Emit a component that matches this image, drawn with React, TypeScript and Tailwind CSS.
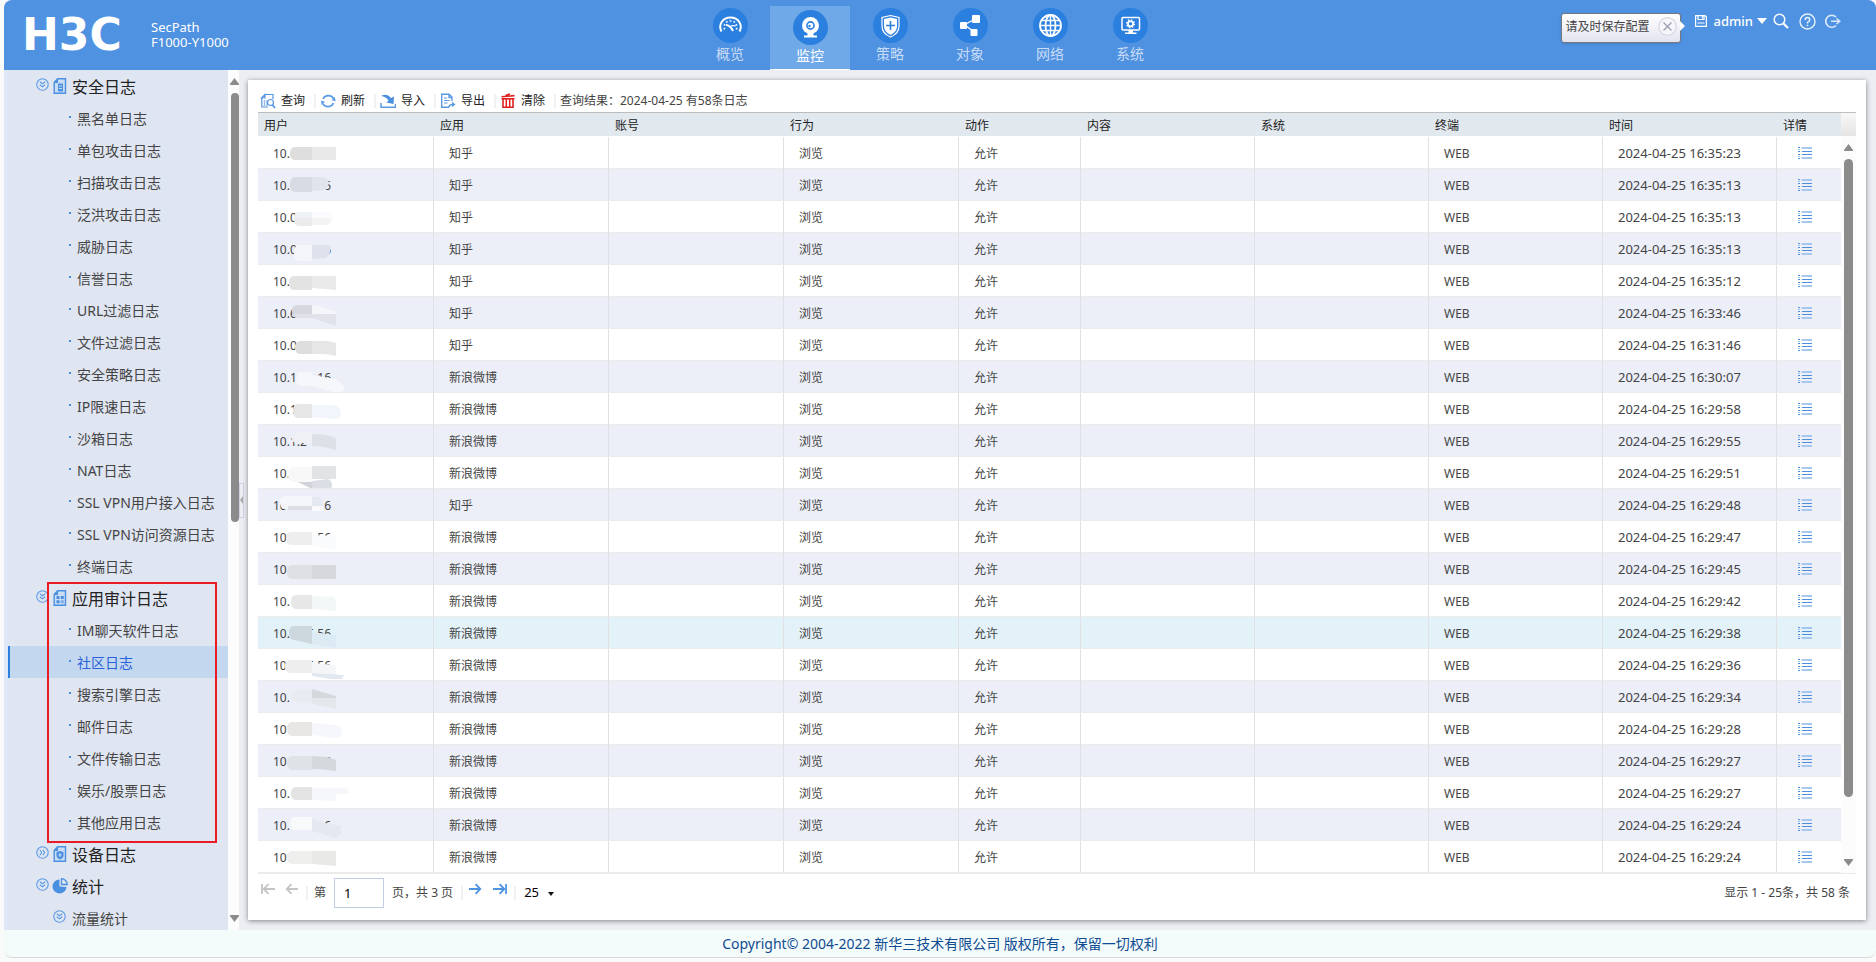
import { ReactNode } from 'react'

type Side = [number, number, number, string]
type Smudge = {
  left: Side
  right: string
  fill: string
  extra?: [string, string][]
}
type Row = {
  head: string
  tail?: string
  app: string
  time: string
  mask: Smudge
}

const ZH = '知乎'
const WB = '新浪微博'

const rows: Row[] = [
  { head: '10.6', app: ZH, time: '16:35:23', mask: { left: [17, 10, 23, '#dedede'], right: 'M39 10H63V23H39Z', fill: '#e9e9e9' } },
  { head: '10.6', tail: '5', app: ZH, time: '16:35:13', mask: { left: [17, 8, 23, '#d8dbe4'], right: 'M39 8H50Q55 9 56 14L53 21L39 22Z', fill: '#e1e4ed' } },
  { head: '10.0', app: ZH, time: '16:35:13', mask: { left: [21, 11, 25, '#ebebeb'], right: 'M39 17H59Q58 24 53 24H39Z', fill: '#f4f4f4', extra: [['M25 11H39V17H21Z', '#eef1f6'], ['M39 11H54Q58 12 59 17H39Z', '#fafbfe']] } },
  { head: '10.0', tail: '6', app: ZH, time: '16:35:13', mask: { left: [21, 12, 28, '#f5f6fa'], right: 'M39 12H57Q59 20 53 25L39 26Z', fill: '#dfe2ec' } },
  { head: '10.', app: ZH, time: '16:35:12', mask: { left: [16, 11, 25, '#e3e3e3'], right: 'M39 11H63V25L39 23Z', fill: '#eaeaea' } },
  { head: '10.6', app: ZH, time: '16:33:46', mask: { left: [19, 8, 21, '#d6d8de'], right: 'M39 8Q52 10 63 15V18H39Z', fill: '#f5f6fa', extra: [['M21 17H39V21H24Z', '#dfe2e8'], ['M39 17H63V29L39 21Z', '#e0e3ea']] } },
  { head: '10.0', app: ZH, time: '16:31:46', mask: { left: [22, 12, 25, '#dedede'], right: 'M39 12H55L63 14V27Q50 24 39 25Z', fill: '#e6e6e6' } },
  { head: '10.1', tail: '16', app: WB, time: '16:30:07', mask: { left: [23, 11, 25, '#f5f7fa'], right: 'M39 14L63 18L71 25V29Q70 32 63 32L39 25Z', fill: '#f6f7fa' } },
  { head: '10.1', app: WB, time: '16:29:58', mask: { left: [20, 11, 25, '#e6e6e6'], right: 'M39 12H61Q68 14 68 20Q68 26 61 26L39 24Z', fill: '#f2f6fc' } },
  { head: '10.1.2', app: WB, time: '16:29:55', mask: { left: [19, 7, 18, '#eef0f5'], right: 'M39 9Q54 9 63 13V25Q50 21 39 21Z', fill: '#dde0e6' } },
  { head: '10.', app: WB, time: '16:29:51', mask: { left: [15, 10, 25, '#f8f8f8'], right: 'M39 9H63V22H39Z', fill: '#e2e3e4', extra: [['M25 25H39V32Z', '#d0d3d9'], ['M39 24L55 22Q60 25 59 30L57 32L39 32Z', '#dcdee5']] } },
  { head: '10', tail: '6', app: ZH, time: '16:29:48', mask: { left: [7, 7, 20, '#f5f6fa'], right: 'M39 8H46Q50 11 50 17V21L39 22Z', fill: '#e4e8f0', extra: [['M15 17H39V21H15Z', '#dcdee5'], ['M39 17H50V22H39Z', '#fbfbfd']] } },
  { head: '10', tail: '56', app: WB, time: '16:29:47', mask: { left: [13, 11, 24, '#eeeeef'], right: 'M39 14L63 15V29L39 25Z', fill: '#fafbfd' } },
  { head: '10', app: WB, time: '16:29:45', mask: { left: [14, 12, 26, '#dee0e5'], right: 'M39 12H63V26H39Z', fill: '#d6d8dd' } },
  { head: '10.', app: WB, time: '16:29:42', mask: { left: [18, 10, 24, '#e6e7e6'], right: 'M39 11L60 12L63 15V26L39 24Z', fill: '#f3f7f8' } },
  { head: '10.', tail: '5.56', app: WB, time: '16:29:38', mask: { left: [16, 9, 23, '#ccd7de'], right: 'M39 15L63 18V31L39 27Z', fill: '#dcebf3', extra: [['M22 23L39 20V27Z', '#ccd7de']] } },
  { head: '10', tail: '5.56', app: WB, time: '16:29:36', mask: { left: [12, 11, 24, '#eeeeef'], right: 'M39 14L63 16V26H39Z', fill: '#f5f6f8', extra: [['M39 24L71 26L69 30H58L39 27Z', '#e2e8f0']] } },
  { head: '10.', app: WB, time: '16:29:34', mask: { left: [18, 9, 21, '#e8ecf0'], right: 'M39 8L63 15V18H39Z', fill: '#d5d8dc', extra: [['M39 17H63V28L39 23Z', '#e4e7ec']] } },
  { head: '10', app: WB, time: '16:29:28', mask: { left: [14, 9, 23, '#e8e7e6'], right: 'M39 10L63 12Q69 14 69 19Q69 25 63 25L39 22Z', fill: '#f6f7fc' } },
  { head: '10', tail: '6', app: WB, time: '16:29:27', mask: { left: [14, 11, 25, '#dfe2e7'], right: 'M39 11L55 12L63 15V26Q50 24 39 24Z', fill: '#d5d8dd' } },
  { head: '10.', app: WB, time: '16:29:27', mask: { left: [18, 10, 23, '#e4e4e4'], right: 'M39 11H72Q76 13 76 17H63V24L39 23Z', fill: '#f6f7fa' } },
  { head: '10.', tail: '6', app: WB, time: '16:29:24', mask: { left: [17, 8, 21, '#f8f9fb'], right: 'M39 9L52 14L68 17V25L63 29L39 22Z', fill: '#e4e8f0' } },
  { head: '10', app: WB, time: '16:29:24', mask: { left: [14, 10, 23, '#efefee'], right: 'M39 10H63V25L39 23Z', fill: '#e9e9e8' } },
]

const securityLogs = [
  '黑名单日志',
  '单包攻击日志',
  '扫描攻击日志',
  '泛洪攻击日志',
  '威胁日志',
  '信誉日志',
  'URL过滤日志',
  '文件过滤日志',
  '安全策略日志',
  'IP限速日志',
  '沙箱日志',
  'NAT日志',
  'SSL VPN用户接入日志',
  'SSL VPN访问资源日志',
  '终端日志',
]

const auditLogs = [
  'IM聊天软件日志',
  '社区日志',
  '搜索引擎日志',
  '邮件日志',
  '文件传输日志',
  '娱乐/股票日志',
  '其他应用日志',
]

function Mask({ left, right, fill, extra = [] }: Smudge) {
  const [x, top, bottom, color] = left
  const mid = (top + bottom) / 2
  return (
    <svg className="absolute left-[15px] top-0" width="80" height="31">
      <path
        fill={color}
        d={`M39 ${top}H${x + 5}Q${x} ${top} ${x} ${mid}Q${x} ${bottom} ${x + 5} ${bottom}H39Z`}
      />
      <path fill={fill} d={right} />
      {extra.map(([d, c]) => (
        <path key={d} d={d} fill={c} />
      ))}
    </svg>
  )
}

/* ---------- header ---------- */

const navItems: { label: string; icon: ReactNode }[] = [
  {
    label: '概览',
    icon: (
      <g fill="none" stroke="#fff">
        <path d="M8.5 23.5C5 17 9.500 9.500 17.500 9.500S30 17 26.500 23.500" strokeWidth="2" />
        <path d="M11.500 21.500C10.500 16 13 13 17.500 13S24.500 16 23.500 21.500" strokeWidth="1.600" strokeDasharray="1.600 2.200" />
        <path d="M13 17Q17 17 20 23" strokeWidth="2" />
        <path d="M16 19Q20 17 23 18" strokeWidth="1.200" />
      </g>
    ),
  },
  {
    label: '监控',
    icon: (
      <g>
        <circle cx="17.500" cy="15.500" r="8.500" fill="#fff" />
        <circle cx="17.500" cy="15.500" r="3.600" fill="none" stroke="#2b7fdf" strokeWidth="1.600" />
        <circle cx="16.500" cy="16" r="1.200" fill="#2b7fdf" />
        <path d="M14.500 23H20.500V25.500H24V27.500H11V25.500H14.500Z" fill="#fff" />
      </g>
    ),
  },
  {
    label: '策略',
    icon: (
      <g>
        <path d="M17.500 7.500L26 9.500V18Q26 25.500 17.500 29Q9 25.500 9 18V9.500Z" fill="none" stroke="#fff" strokeWidth="1.200" />
        <path d="M17.500 9.500L24 11V18Q24 24 17.500 27Q11 24 11 18V11Z" fill="#fff" />
        <path d="M17.500 13V22M13 17.500H22" stroke="#2b7fdf" strokeWidth="1.600" />
      </g>
    ),
  },
  {
    label: '对象',
    icon: (
      <g fill="#fff">
        <rect x="7" y="14" width="7" height="7" rx="1" />
        <rect x="19" y="7" width="8" height="8" rx="1" />
        <rect x="17.500" y="21" width="7" height="7" rx="1" />
        <path d="M11 17L22 11M12 17L21 24" stroke="#fff" strokeWidth="1.300" />
      </g>
    ),
  },
  {
    label: '网络',
    icon: (
      <g fill="none" stroke="#fff" strokeWidth="1.800">
        <circle cx="17.500" cy="17.500" r="10.500" />
        <ellipse cx="17.500" cy="17.500" rx="5" ry="10.500" />
        <path d="M9 12.500H26M9 22.500H26M7 17.500H28M17.500 7V28" strokeWidth="1.400" />
      </g>
    ),
  },
  {
    label: '系统',
    icon: (
      <g>
        <rect x="9" y="9.500" width="17.500" height="12.500" rx="1" fill="none" stroke="#fff" strokeWidth="1.500" />
        <path d="M15.500 22H20V24.500H23.500V26H12V24.500H15.500Z" fill="#fff" />
        <circle cx="17.500" cy="15.700" r="2.600" fill="none" stroke="#fff" strokeWidth="1.800" />
        <circle cx="17.500" cy="15.700" r="4" fill="none" stroke="#fff" strokeWidth="1.200" strokeDasharray="1.500 1.640" />
      </g>
    ),
  },
]

function Header() {
  return (
    <header className="flex h-[70px] shrink-0 items-start rounded-t-lg bg-[#4f92e1] text-white">
      <div className="flex w-[686px] items-center pt-[13px] pl-[18px]">
        <span className="w-[129px] font-['DejaVu_Sans'] text-[44px] leading-[44px] font-bold">H3C</span>
        <div className="text-[13px] leading-[15px]">
          <p>SecPath</p>
          <p>F1000-Y1000</p>
        </div>
      </div>
      <nav className="flex">
        {navItems.map(({ label, icon }) => {
          const active = label === '监控'
          return (
            <a
              key={label}
              href="#"
              className={
                active
                  ? 'mt-[6px] flex h-16 w-20 flex-col items-center border-b border-white bg-[#6fa9e8] pt-1 text-white'
                  : 'flex h-[70px] w-20 flex-col items-center pt-2 text-[#c9dcf6]'
              }
            >
              <svg width="35" height="35" viewBox="0 0 35 35">
                <circle cx="17.500" cy="17.500" r="17.500" fill="#2b7fdf" />
                {icon}
              </svg>
              <span className="text-sm leading-[22px]">{label}</span>
            </a>
          )
        })}
      </nav>
      <div className="ml-auto flex items-start pt-[13px] pr-[35px]">
        <div className="relative mr-[14px] flex h-[30px] w-[120px] items-center justify-between rounded-[3px] border border-[#77777f] bg-linear-to-b from-white to-[#e3e3f0] pr-[3px] pb-[3px] pl-1 text-xs text-[#444] shadow">
          请及时保存配置
          <button aria-label="关闭" className="h-[19px] w-[19px]">
            <svg width="19" height="19" viewBox="0 0 19 19" fill="none">
              <circle cx="9.500" cy="9.500" r="8.700" fill="#f6f6fb" stroke="#d9dae4" strokeWidth="1.400" />
              <path d="M5.500 5.500L13.500 13.500M13.500 5.500L5.500 13.500" stroke="#9a9fb5" strokeWidth="1.300" />
            </svg>
          </button>
          <svg className="absolute top-[7px] -right-[5px]" width="5" height="10">
            <path d="M0 0L5 5L0 10Z" fill="#fff" />
          </svg>
        </div>
        <div className="flex h-4 items-center">
          <button aria-label="保存" className="mr-[7px]">
            <svg width="12" height="12" viewBox="0 0 12 12" fill="none" stroke="#fff" strokeWidth="1.200">
              <path d="M.6.6H10L11.400 2V11.400H.6Z" />
              <path d="M3 .6V4.500H9V.6M2.500 8H9.500" />
              <path d="M7.500 1V3.500" />
            </svg>
          </button>
          <button className="mr-[6px] flex items-center gap-1 text-[13px] leading-4 font-medium">
            admin
            <svg width="10" height="6">
              <path d="M0 0H10L5 6Z" fill="#fff" />
            </svg>
          </button>
          <button aria-label="搜索" className="mr-[10px]">
            <svg width="16" height="16" viewBox="0 0 16 16" fill="none" stroke="#fff">
              <circle cx="6.500" cy="6.500" r="5.300" strokeWidth="1.500" />
              <path d="M10.500 10.500L15 15" strokeWidth="2.200" />
            </svg>
          </button>
          <button aria-label="帮助" className="mr-[8px]">
            <svg width="17" height="17" viewBox="0 0 17 17" fill="none" stroke="#e8f1fc" strokeWidth="1.400">
              <circle cx="8.500" cy="8.500" r="7.500" />
              <path d="M6.200 7Q6.200 4.500 8.500 4.500T10.800 6.700Q10.800 8 8.500 9.300V10.500M8.500 11.700V13.200" />
            </svg>
          </button>
          <button aria-label="退出">
            <svg width="17" height="15" viewBox="0 0 17 15" fill="none" stroke="#dbe9fa" strokeWidth="1.700">
              <path d="M12 3A6 6 0 1 0 12 11.500" />
              <path d="M7 7.300H15.500M12.500 4.500L15.800 7.300L12.500 10" strokeWidth="1.500" />
            </svg>
          </button>
        </div>
      </div>
    </header>
  )
}

/* ---------- sidebar ---------- */

function Toggle({ open = true }: { open?: boolean }) {
  return (
    <svg
      className={open ? 'mb-[4px]' : 'mb-[4px] -rotate-90'}
      width="13"
      height="13"
      viewBox="0 0 13 13"
      fill="none"
      stroke="#5b9be4"
    >
      <circle cx="6.500" cy="6.500" r="5.700" strokeWidth="1.100" />
      <path d="M3.800 3.800L6.500 5.800L9.200 3.800M3.800 6.800L6.500 8.800L9.200 6.800" strokeWidth="1.100" />
    </svg>
  )
}

function DocIcon({ children }: { children: ReactNode }) {
  return (
    <svg width="14" height="16" viewBox="0 0 14 16">
      <path d="M4.500.8H12.500V15.200H1.200V4.500Z" fill="#c9ddf5" stroke="#4b90e0" strokeWidth="1.400" />
      <path d="M1 5L5 1V5Z" fill="#4b90e0" />
      {children}
    </svg>
  )
}

function Group({ label, icon, open }: { label: string; icon: ReactNode; open?: boolean }) {
  return (
    <a href="#" className="flex h-8 items-center pl-[28px] text-base leading-8 text-[#222]">
      <Toggle open={open} />
      <span className="mr-[4px] ml-[3px] flex w-4 justify-center">{icon}</span>
      <span className="pt-px">{label}</span>
    </a>
  )
}

function Item({ label, active }: { label: string; active?: boolean }) {
  return (
    <a
      href="#"
      className={
        active
          ? 'flex h-8 items-center border-l-2 border-[#2b7fdf] bg-[#c3d7ef] pl-[59px] text-sm whitespace-nowrap text-[#2a62dc]'
          : 'flex h-8 items-center pl-[61px] text-sm whitespace-nowrap text-[#444]'
      }
    >
      <span className="mr-[6px] mb-[2px] h-[2px] w-[2px] bg-[#4b90e0]" />
      <span className="pt-[2px]">{label}</span>
    </a>
  )
}

function Arrow({ down }: { down?: boolean }) {
  return (
    <svg width="9" height="7" className={down ? 'rotate-180' : ''}>
      <path d="M4.500 0L9 6V7H0V6Z" fill="#8b8b8b" />
    </svg>
  )
}

function Sidebar() {
  return (
    <aside className="flex w-[235px] shrink-0">
      <div className="min-w-0 flex-1 overflow-hidden border-l-4 border-[#dfe8f8] bg-[#dfe5f1]">
        <Group
          label="安全日志"
          icon={
            <DocIcon>
              <path d="M5 5.500H10V13.500H5Z" fill="#4b90e0" />
              <path d="M6 8H9M6 10.500H9" stroke="#c9ddf5" />
            </DocIcon>
          }
        />
        {securityLogs.map((label) => (
          <Item key={label} label={label} />
        ))}
        <div className="relative">
          <Group
            label="应用审计日志"
            icon={
              <DocIcon>
                <path d="M3.500 6H6.500V9H3.500ZM7.800 6H10.800V9H7.800ZM3.500 10.200H6.500V13.200H3.500Z" fill="#4b90e0" />
                <circle cx="9.300" cy="11.700" r="1.200" fill="none" stroke="#4b90e0" />
              </DocIcon>
            }
          />
          {auditLogs.map((label) => (
            <Item key={label} label={label} active={label === '社区日志'} />
          ))}
          <div className="pointer-events-none absolute top-0 right-[11px] -bottom-[5px] left-[39px] border-2 border-[#ea1b24]" />
        </div>
        <Group
          label="设备日志"
          open={false}
          icon={
            <DocIcon>
              <path d="M7 5L10.500 6V9.500Q10.500 12 7 13.500Q3.500 12 3.500 9.500V6Z" fill="#4b90e0" />
              <path d="M7 7V11M5.500 9H8.500" stroke="#c9ddf5" />
            </DocIcon>
          }
        />
        <Group
          label="统计"
          icon={
            <svg width="16" height="16" viewBox="0 0 16 16">
              <path d="M7.500 1.500A7 7 0 1 0 14.500 9L7.500 8.500Z" fill="#4b90e0" />
              <path d="M9.500.7A6 6 0 0 1 15.300 6.500L9.500 6.500Z" fill="none" stroke="#4b90e0" strokeWidth="1.300" />
            </svg>
          }
        />
        <a href="#" className="flex h-8 items-center gap-[6px] pl-[45px] text-sm text-[#444]">
          <Toggle />
          <span className="pt-[2px]">流量统计</span>
        </a>
      </div>
      <div className="flex w-[11px] flex-col items-end overflow-hidden bg-[#fcfcfc] pt-2 pb-[8px]">
        <Arrow />
        <div className="mt-2 h-[429px] w-[8px] rounded-full bg-[#8b8b8b]" />
        <div className="mt-auto">
          <Arrow down />
        </div>
      </div>
    </aside>
  )
}

/* ---------- log panel ---------- */

const tools: { label: string; icon: ReactNode }[] = [
  {
    label: '查询',
    icon: (
      <g fill="none" stroke="#5594df" strokeWidth="1.200">
        <path d="M4.500 1.500H13V6M1.800 4.500V14H8M1.500 5L5 1.500V5Z" />
        <path d="M4.500 7V13M7 7V13" strokeWidth="1.500" opacity=".6" />
        <circle cx="10.500" cy="9.500" r="3" />
        <path d="M12.500 12L15 15" strokeWidth="1.800" />
      </g>
    ),
  },
  {
    label: '刷新',
    icon: (
      <g>
        <path d="M3 6A6 6 0 0 1 13.500 5.500M13.500 10A6 6 0 0 1 3 11" fill="none" stroke="#5b9be4" strokeWidth="1.700" />
        <path d="M15.500 8.500L11.500 7L15 4ZM1 7.500L5 9L1.500 12Z" fill="#5b9be4" />
      </g>
    ),
  },
  {
    label: '导入',
    icon: (
      <g>
        <path d="M1 3Q7-.5 11 5L14 3.500L13.500 11L6.500 9.500L8.500 7.500Q6 3.500 1 3Z" fill="#4b90e0" />
        <path d="M1 10V14.200H15.500V11" fill="none" stroke="#5b9be4" strokeWidth="1.500" />
      </g>
    ),
  },
  {
    label: '导出',
    icon: (
      <g fill="none" stroke="#5b9be4" strokeWidth="1.400">
        <path d="M8 14.200H1.700V1.200H9L12 4V8M9 1V4.500H12" />
        <path d="M4 5H7M4 7.500H9.500M4 10H7.500" strokeWidth="1.200" />
        <path d="M8.500 15Q9 11.500 13 11.500" />
        <path d="M12 8.700L15.500 11.500L12 14.300Z" fill="#5b9be4" stroke="none" />
      </g>
    ),
  },
  {
    label: '清除',
    icon: (
      <g stroke="#e02020" fill="none" strokeWidth="1.600">
        <path d="M1.500 3.800L14.500 2.600M5.500 2.600L10 1" />
        <path d="M3 6V14.200H13V6" />
        <path d="M6.300 6V14M9.700 6V14" strokeWidth="1.500" />
        <path d="M1.500 5.800H14.500" />
      </g>
    ),
  },
]

function Toolbar() {
  return (
    <div className="flex h-[33px] items-center border-b border-[#bdbdbd] pt-[10px] pl-[2px] text-xs text-[#222]">
      {tools.map(({ label, icon }) => (
        <div key={label} className="flex w-[60px] items-center">
          <button className="flex items-center gap-[5px]">
            <svg width="16" height="16" viewBox="0 0 16 16">
              {icon}
            </svg>
            {label}
          </button>
          <span className="ml-[9px] h-[14px] w-[2px] bg-[#f1f1f1]" />
        </div>
      ))}
      <span className="text-[#444]">查询结果：2024-04-25 有58条日志</span>
    </div>
  )
}

const heads = ['用户', '应用', '账号', '行为', '动作', '内容', '系统', '终端', '时间', '详情']

function LogTable() {
  return (
    <table className="flex-1 table-fixed border-separate border-spacing-0 text-left text-xs text-[#444]">
      <colgroup>
        <col className="w-[176px]" />
        <col className="w-[175px]" />
        <col className="w-[175px]" />
        <col className="w-[175px]" />
        <col className="w-[122px]" />
        <col className="w-[174px]" />
        <col className="w-[174px]" />
        <col className="w-[174px]" />
        <col className="w-[174px]" />
        <col className="w-[64px]" />
      </colgroup>
      <thead>
        <tr>
          {heads.map((h) => (
            <th key={h} className="h-6 border-b border-white bg-[#e1e8ee] p-0 pt-[2px] pl-[6px] font-normal text-[#222]">
              {h}
            </th>
          ))}
        </tr>
      </thead>
      <tbody className="[&_td]:h-8 [&_td]:border-b [&_td]:border-[#ebebeb] [&_td]:p-0 [&_td]:pt-[2px] [&_td]:pl-[15px] [&_td:not(:last-child)]:border-r [&_td:not(:last-child)]:border-r-[#e0e1e4]">
        {rows.map((r, i) => (
          <tr key={i} className={i === 15 ? 'bg-[#e3f1f8]' : i % 2 ? 'bg-[#eceff8]' : 'bg-white'}>
            <td className="relative">
              <div className="flex w-[58px] justify-between">
                <span>{r.head}</span>
                <span>{r.tail}</span>
              </div>
              <Mask {...r.mask} />
            </td>
            <td>{r.app}</td>
            <td />
            <td>浏览</td>
            <td>允许</td>
            <td />
            <td />
            <td>WEB</td>
            <td className="text-[13px]">2024-04-25 {r.time}</td>
            <td>
              <button aria-label="详情" className="mb-[2px] ml-[6px] block">
                <svg width="14" height="12" viewBox="0 0 14 12">
                  <path d="M0 .5H2M0 4.500H2M0 7.500H2M0 11.500H2M4 4.500H14M4 7.500H14" stroke="#4b90e0" />
                  <path d="M0 2.500H2M0 9.500H2" stroke="#4b90e0" opacity=".5" />
                  <path d="M3.500 1H14M3.500 11H14" stroke="#a6c8f0" strokeWidth="2" />
                </svg>
              </button>
            </td>
          </tr>
        ))}
      </tbody>
    </table>
  )
}

function PageArrow({ last, flip }: { last?: boolean; flip?: boolean }) {
  return (
    <svg
      width="14"
      height="12"
      viewBox="0 0 14 12"
      fill="none"
      stroke="currentColor"
      strokeWidth="1.800"
      className={flip ? 'rotate-180' : ''}
    >
      <path d="M0 6H11M6.500 1.200L11.300 6L6.500 10.800" />
      {last && <path d="M13 1V11" />}
    </svg>
  )
}

function Pager() {
  return (
    <div className="flex h-[37px] items-center text-xs text-[#444]">
      <div className="mb-2 flex gap-[9px] pl-[3px] text-[#c4c4c4]">
        <button aria-label="首页" disabled>
          <PageArrow last flip />
        </button>
        <button aria-label="上一页" disabled>
          <PageArrow flip />
        </button>
      </div>
      <span className="mr-[6px] ml-[8px] h-[14px] w-[2px] bg-[#f1f1f1]" />
      <label htmlFor="page" className="mr-2">
        第
      </label>
      <input
        id="page"
        defaultValue="1"
        className="h-[30px] w-[50px] border border-[#c0cde4] pl-[9px] text-[13px] text-black"
      />
      <span className="ml-2">页，共 3 页</span>
      <span className="mr-[6px] ml-2 h-[14px] w-[2px] bg-[#f1f1f1]" />
      <div className="mb-2 flex gap-[10px] text-[#4f94e3]">
        <button aria-label="下一页">
          <PageArrow />
        </button>
        <button aria-label="末页">
          <PageArrow last />
        </button>
      </div>
      <span className="mr-[8px] ml-[7px] h-[14px] w-[2px] bg-[#f1f1f1]" />
      <div className="relative">
        <select aria-label="每页条数" defaultValue="25" className="w-[30px] appearance-none text-[13px] text-black">
          <option>25</option>
          <option>50</option>
        </select>
        <svg className="pointer-events-none absolute top-[8px] right-0" width="6" height="4">
          <path d="M0 0H6L3 4Z" fill="#111" />
        </svg>
      </div>
      <span className="ml-auto pr-[6px]">显示 1 - 25条，共 58 条</span>
    </div>
  )
}

export default function App() {
  return (
    <div className="flex h-screen flex-col overflow-hidden bg-[#fafafa] pb-1 pl-1 font-['Noto_Sans','Noto_Sans_CJK_SC',sans-serif]">
      <Header />
      <div className="flex min-h-0 flex-1 bg-[#edeef3]">
        <Sidebar />
        <div className="flex w-[9px] items-center">
          <button
            aria-label="收起"
            className="flex h-[35px] w-[5px] items-center justify-end border border-[#d0d3e6]"
          >
            <svg width="3" height="8">
              <path d="M3 0V8L0 4Z" fill="#aaa" />
            </svg>
          </button>
        </div>
        <main className="mt-[10px] mr-[10px] mb-[10px] flex min-w-0 flex-1 flex-col bg-white px-[10px] shadow-[0_1px_5px_rgba(0,0,0,0.45)]">
          <Toolbar />
          <div className="flex border-b border-[#ebebeb]">
            <LogTable />
            <div className="flex w-[15px] shrink-0 flex-col items-center bg-[#fcfcfc] pb-[7px]">
              <div className="h-[23px] w-full bg-linear-to-b from-[#f8f8f8] to-[#e4e4e4]" />
              <div className="mt-2">
                <Arrow />
              </div>
              <div className="mt-2 h-[638px] w-[9px] rounded-full bg-[#8b8b8b]" />
              <div className="mt-auto">
                <Arrow down />
              </div>
            </div>
          </div>
          <Pager />
        </main>
      </div>
      <footer className="h-7 shrink-0 rounded-b-lg border-b border-[#d8d8d8] bg-[#f4fbfb] text-center text-sm leading-7 text-[#0f4c92]">
        Copyright© 2004-2022 新华三技术有限公司 版权所有，保留一切权利
      </footer>
    </div>
  )
}
